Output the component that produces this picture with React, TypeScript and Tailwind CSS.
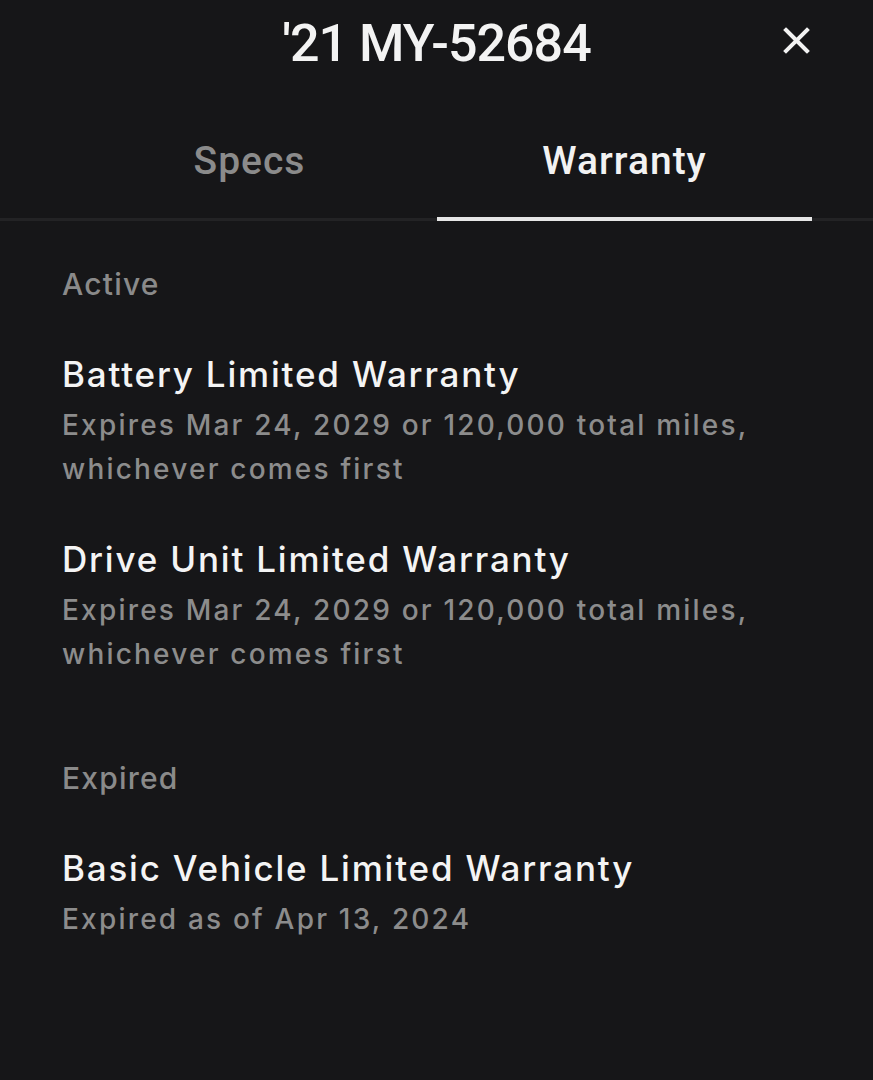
import React from "react";

const items = [
  {
    section: "Active",
    rows: [
      { title: "Battery Limited Warranty", lines: ["Expires Mar 24, 2029 or 120,000 total miles,", "whichever comes first"] },
      { title: "Drive Unit Limited Warranty", lines: ["Expires Mar 24, 2029 or 120,000 total miles,", "whichever comes first"] },
    ],
  },
  {
    section: "Expired",
    rows: [{ title: "Basic Vehicle Limited Warranty", lines: ["Expired as of Apr 13, 2024"] }],
  },
];

const roboto = { fontFamily: "Roboto, 'Liberation Sans', sans-serif" };

export default function App() {
  return (
    <div className="w-[873px] h-[1080px] bg-[#161618] text-white overflow-hidden" style={{ fontFamily: "Inter, 'Noto Sans', sans-serif" }}>
      {/* Header */}
      <div className="grid grid-cols-[1fr_auto_1fr] items-center h-[88px]">
        <div />
        <div className="text-[52px] leading-none font-medium text-[#f3f3f3] tracking-[-1px]" style={roboto}>
          '21 MY-52684
        </div>
        <div className="flex justify-end pr-[63px] pb-[7px]">
          <svg width="27" height="27" viewBox="0 0 27 27" fill="none">
            <path d="M3 3L24 24M24 3L3 24" stroke="#f2f2f2" strokeWidth="4" strokeLinecap="square" />
          </svg>
        </div>
      </div>

      {/* Tabs */}
      <div className="border-b-[3px] border-[#232325] mt-[54px]">
        <div className="flex pl-[62px] pr-[61px]">
          <div className="flex-1 flex justify-center pb-[36px] text-[39px] leading-none font-medium tracking-[1px] text-[#8b8b8b]" style={roboto}>
            Specs
          </div>
          <div className="flex-1 flex justify-center pb-[36px] -mb-[3px] border-b-4 border-[#e6e6e6] text-[39px] leading-none font-medium tracking-[1px] text-[#f2f2f2]" style={roboto}>
            Warranty
          </div>
        </div>
      </div>

      {/* Content */}
      <div className="px-[62px] pt-[45px] flex flex-col">
        {items.map((s, si) => (
          <div key={s.section} className={si > 0 ? "mt-[84px]" : ""}>
            <div className="text-[30px] leading-[36px] font-medium tracking-[1.2px] text-[#8a8a8a]">{s.section}</div>
            <div className="flex flex-col gap-[47px] mt-[51px]">
              {s.rows.map((r) => (
                <div key={r.title}>
                  <div className="text-[35px] leading-[42px] font-medium tracking-[1.8px] text-[#f4f4f4]">{r.title}</div>
                  <div className="mt-[8px] text-[28px] leading-[44px] font-medium tracking-[2.2px] text-[#8c8c8c]">
                    {r.lines.map((l) => (
                      <div key={l}>{l}</div>
                    ))}
                  </div>
                </div>
              ))}
            </div>
          </div>
        ))}
      </div>
    </div>
  );
}
